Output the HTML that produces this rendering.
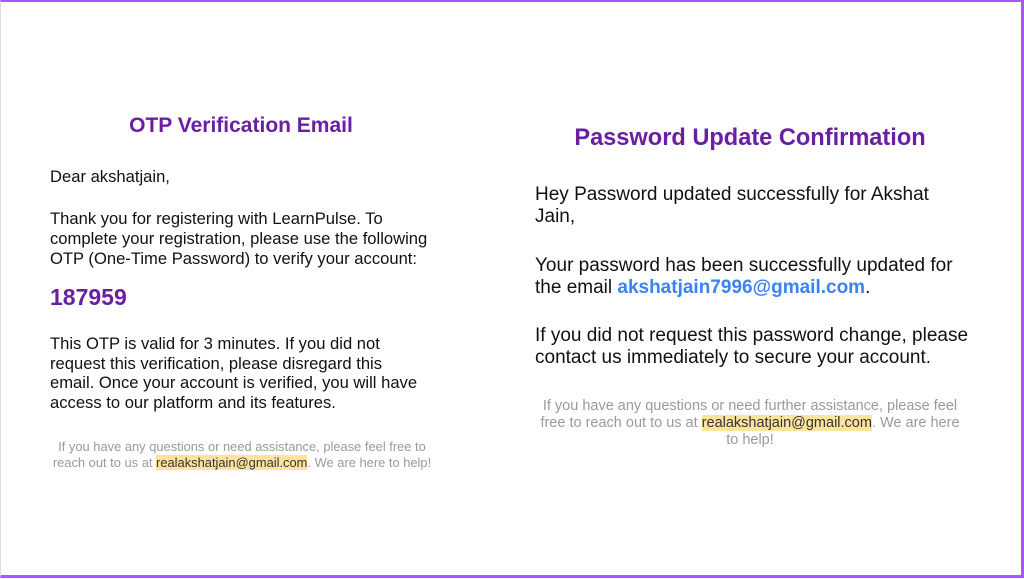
<html><head><style>
body{margin:0;width:1024px;height:579px;overflow:hidden;background:#fff;font-family:"Liberation Sans",sans-serif;}
.frame{position:absolute;left:0;top:0;width:1020px;height:573px;border-top:2px solid #a259ff;border-bottom:3px solid #a259ff;border-right:3px solid #a259ff;border-left:1px solid #ddd;}
.t{position:absolute;color:#111;white-space:nowrap;}
p{margin:0}
.h{color:#6a1fa3;font-weight:bold;text-align:center;position:absolute;}
.ft{position:absolute;color:#9a9a9a;text-align:center;white-space:nowrap;}
.hl{background:#fde49c;color:#333;}
</style></head><body>
<div class="frame"></div>
<div class="h" style="left:40px;width:402px;top:114px;font-size:21px;">OTP Verification Email</div>
<div class="t" style="left:50px;top:167px;font-size:16.6px;line-height:20px;">
<p>Dear akshatjain,</p>
<p style="margin-top:22px">Thank you for registering with LearnPulse. To<br>complete your registration, please use the following<br>OTP (One-Time Password) to verify your account:</p>
<p style="margin-top:13px;font-size:23px;font-weight:bold;color:#6a1fa3;line-height:30px">187959</p>
<p style="margin-top:22px;line-height:19.5px">This OTP is valid for 3 minutes. If you did not<br>request this verification, please disregard this<br>email. Once your account is verified, you will have<br>access to our platform and its features.</p>
</div>
<div class="ft" style="left:42px;width:400px;top:439px;font-size:12.9px;line-height:16px;">If you have any questions or need assistance, please feel free to<br>reach out to us at <span class="hl">realakshatjain@gmail.com</span>. We are here to help!</div>

<div class="h" style="left:530px;width:440px;top:125px;font-size:23.6px;">Password Update Confirmation</div>
<div class="t" style="left:535px;top:184px;font-size:19px;line-height:22px;">
<p>Hey Password updated successfully for Akshat<br>Jain,</p>
<p style="margin-top:27px">Your password has been successfully updated for<br>the email <b style="color:#3b82f6">akshatjain7996@gmail.com</b>.</p>
<p style="margin-top:26px">If you did not request this password change, please<br>contact us immediately to secure your account.</p>
</div>
<div class="ft" style="left:530px;width:440px;top:398px;font-size:14.5px;line-height:17px;">If you have any questions or need further assistance, please feel<br>free to reach out to us at <span class="hl">realakshatjain@gmail.com</span>. We are here<br>to help!</div>
</body></html>
